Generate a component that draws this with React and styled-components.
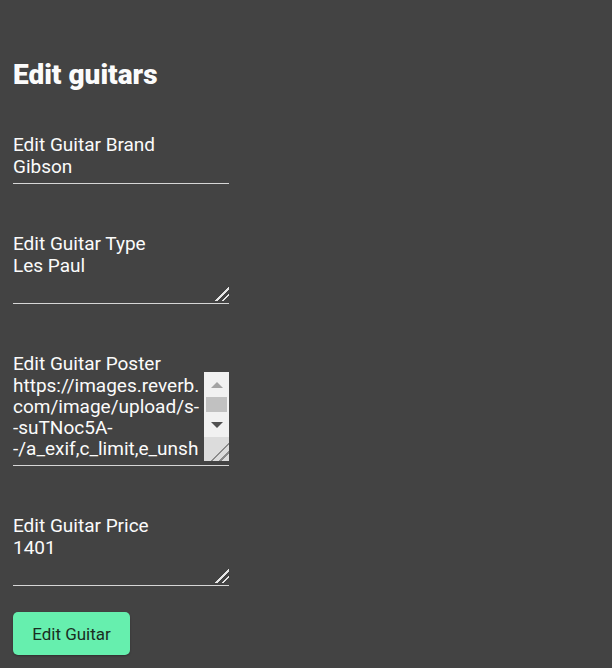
import React, { useState } from 'react'
import styled, { createGlobalStyle } from 'styled-components'

const GlobalStyle = createGlobalStyle`
body {
  margin: 0;
  background: #434343;
  font-family: Roboto, "Liberation Sans", sans-serif;
  color: #fbfbfb;
}
`

const Page = styled.div`
padding: 58px 13px 14px;
display: flex;
flex-direction: column;
align-items: flex-start;
`

const Title = styled.h1`
margin: 0 0 46px;
font-size: 28px;
font-weight: 900;
line-height: 33px;
`

const Form = styled.form`
display: flex;
flex-direction: column;
align-items: flex-start;
`

const Field = styled.label`
display: flex;
flex-direction: column;
font-size: 19px;
line-height: 16px;
width: 216px;
margin-bottom: ${props => props.$last ? 26 : 52}px;
`

const Underline = styled.div`
position: relative;
display: flex;
flex-direction: column;
border-bottom: 1px solid #d6d6d6;
padding-bottom: ${props => props.$pad}px;
`

const baseInput = `
width: 216px;
box-sizing: border-box;
background: transparent;
border: none;
color: #fbfbfb;
font-family: Roboto, "Liberation Sans", sans-serif;
font-size: 19px;
line-height: 21px;
margin: 0;
outline: none;
`

const StyledInput = styled.input`
${baseInput}
padding: 3px 0 2px;
`

const StyledTextArea = styled.textarea`
${baseInput}
display: block;
height: ${props => props.$h}px;
padding: 3px ${props => props.$scroll ? 25 : 0}px 0 0;
resize: vertical;
overflow: hidden;
overflow-wrap: break-word;

&::-webkit-resizer {
  background: linear-gradient(135deg, transparent 0 52%, #e6e6e6 52% 60%, transparent 60% 74%, #e6e6e6 74% 82%, transparent 82%);
}
`

const FakeScrollbar = styled.div`
position: absolute;
top: 0;
right: 0;
width: 25px;
height: ${props => props.$h}px;
display: flex;
flex-direction: column;
background: #f1f1f1;
pointer-events: none;
`

const ScrollButton = styled.div`
height: ${props => props.$h}px;
display: flex;
align-items: center;
justify-content: center;

&::before {
  content: '';
  width: 0;
  height: 0;
  border-left: 6px solid transparent;
  border-right: 6px solid transparent;
  ${props => props.$up
    ? 'border-bottom: 6px solid #a3a3a3;'
    : 'border-top: 6px solid #505050;'}
}
`

const ScrollThumb = styled.div`
height: 15px;
margin: 0 2px;
background: #c1c1c1;
`

const ScrollCorner = styled.div`
margin-top: auto;
height: 24px;
background:
  linear-gradient(135deg, transparent 0 62%, #8a8a8a 62% 67%, transparent 67% 79%, #8a8a8a 79% 84%, transparent 84%),
  #dcdcdc;
`

const StyledButton = styled.button`
width: 117px;
height: 43px;
border: none;
border-radius: 5px;
background-color: #66efae;
color: #1a2d22;
font-family: Roboto, "Liberation Sans", sans-serif;
font-size: 17px;
box-shadow: 0 1px 2px rgba(0,0,0,0.3);
cursor: pointer;
`

const App = () => {
    const [formState, setFormState] = useState({
        brand: 'Gibson',
        type: 'Les Paul',
        poster: 'https://images.reverb.com/image/upload/s--suTNoc5A--/a_exif,c_limit,e_unsharp_mask:80,f_auto,fl_progressive,g_south,h_620,q_90,w_620/v1557863584/gibson.jpg',
        price: '1401'
    })
    const change = key => e => setFormState({...formState, [key]: e.target.value})
    return (
        <Page>
            <GlobalStyle />
            <Title>Edit guitars</Title>
            <Form onSubmit={e => e.preventDefault()}>
                <Field>
                    Edit Guitar Brand
                    <Underline $pad={4}>
                        <StyledInput type='text' value={formState.brand} onChange={change('brand')} />
                    </Underline>
                </Field>
                <Field>
                    Edit Guitar Type
                    <Underline $pad={2}>
                        <StyledTextArea $h={49} value={formState.type} onChange={change('type')} />
                    </Underline>
                </Field>
                <Field>
                    Edit Guitar Poster
                    <Underline $pad={4}>
                        <StyledTextArea $h={89} $scroll value={formState.poster} onChange={change('poster')} />
                        <FakeScrollbar $h={89}>
                            <ScrollButton $up $h={25} />
                            <ScrollThumb />
                            <ScrollButton $h={25} />
                            <ScrollCorner />
                        </FakeScrollbar>
                    </Underline>
                </Field>
                <Field $last>
                    Edit Guitar Price
                    <Underline $pad={2}>
                        <StyledTextArea $h={49} value={formState.price} onChange={change('price')} />
                    </Underline>
                </Field>
                <StyledButton type='submit'>Edit Guitar</StyledButton>
            </Form>
        </Page>
    )
}

export default App
